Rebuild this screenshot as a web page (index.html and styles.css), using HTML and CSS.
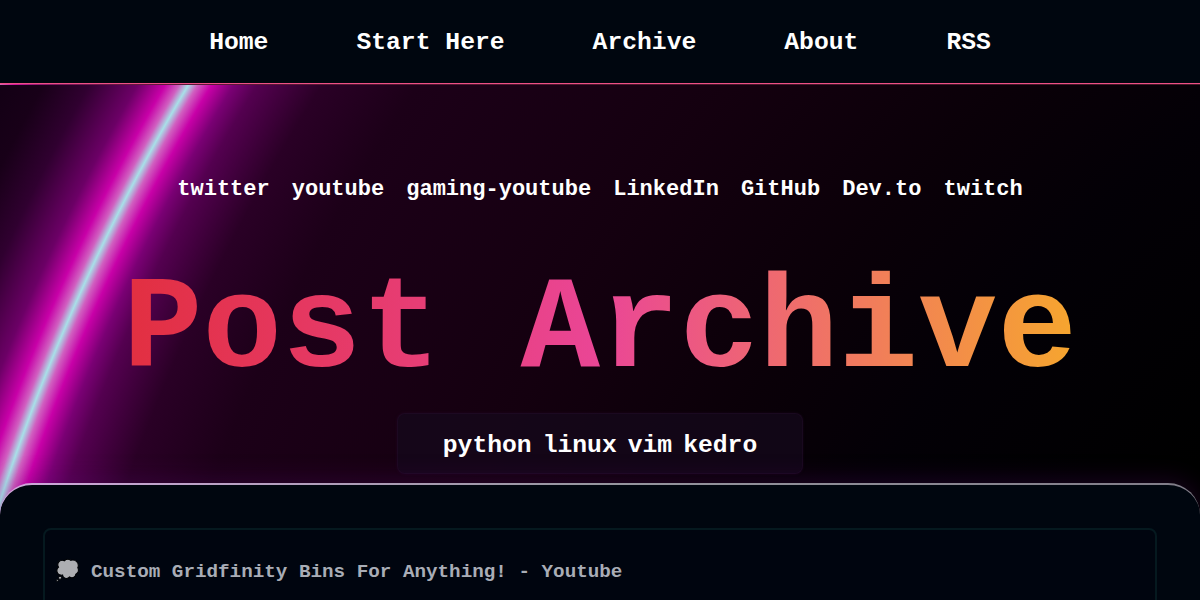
FILE: index.html
```html
<!DOCTYPE html>
<html lang="en">
<head>
<meta charset="utf-8">
<title>Post Archive</title>
<link rel="stylesheet" href="styles.css">
</head>
<body>
<div class="page">
  <nav class="nav">
    <a href="#">Home</a><a href="#">Start Here</a><a href="#">Archive</a><a href="#">About</a><a href="#">RSS</a>
  </nav>
  <header class="hero">
    <div class="socials">
      <a href="#">twitter</a><a href="#">youtube</a><a href="#">gaming-youtube</a><a href="#">LinkedIn</a><a href="#">GitHub</a><a href="#">Dev.to</a><a href="#">twitch</a>
    </div>
    <h1 class="title">Post Archive</h1>
    <div class="tags">
      <a href="#">python</a><a href="#">linux</a><a href="#">vim</a><a href="#">kedro</a>
    </div>
  </header>
  <main class="sheet">
    <article class="card">
      <p class="post"><span class="emoji">💭</span><a href="#">Custom Gridfinity Bins For Anything! - Youtube</a></p>
    </article>
  </main>
</div>
</body>
</html>
```
FILE: styles.css
```css
* { box-sizing: border-box; }
html, body { margin: 0; height: 100%; background: #00060f; }
body { font-family: "Liberation Mono", monospace; font-weight: 700; color: #fff; }
a { color: inherit; text-decoration: none; }
.page { height: 600px; overflow: hidden; display: flex; flex-direction: column; }
.nav {
  height: 84px; flex: none; display: flex; justify-content: center; align-items: center; gap: 88px;
  background: #00060f; border-bottom: 1px solid #ee4f86; font-size: 24.7px;
}
.hero {
  height: 440px; flex: none; display: flex; flex-direction: column; align-items: center; padding-top: 92px;
  border-top: 1px solid rgba(238, 79, 134, .3);
  background: radial-gradient(circle 2260px at 1945px 1045px,
    #000 1000px, #030006 1250px, #0a0008 1400px, #14000f 1600px, #1c0018 1850px, #2a0026 1930px, #540050 1985px, #7a0074 2005px, #c800a8 2024px, #d060c0 2036px, #a8e0e8 2044px, #d060c0 2052px, #c800a8 2064px, #6c0066 2088px, #300030 2130px, #180018 2170px, #0c0010 2260px);
}
.socials { display: flex; gap: 22px; font-size: 22.02px; line-height: 26px; }
.title {
  margin: 49px 0 0; font-size: 132.5px; line-height: 1.2; font-weight: 700; white-space: pre;
  background: linear-gradient(90deg, #e22f40, #ea4696 50%, #f6a62e 100%);
  -webkit-background-clip: text; background-clip: text; color: transparent;
}
.tags {
  margin-top: 2px; padding-top: 2px; width: 406px; height: 61px; flex: none; display: flex; gap: 11px; justify-content: center; align-items: center;
  font-size: 24.7px; background: rgba(22, 8, 28, .7); border: 1px solid rgba(60, 25, 70, .2); border-radius: 8px; box-shadow: 0 0 3px rgba(50, 15, 55, .3);
}
.sheet {
  margin-top: -41px; position: relative; flex: 1; border-top: 2px solid transparent;
  background: linear-gradient(#00060f, #00060f) padding-box, linear-gradient(90deg, #d0a8dc, #96969f 50%, #807c88) border-box;
  border-radius: 32px 32px 0 0; padding: 43px 43px 0;
  box-shadow: 0 -3px 24px rgba(90, 10, 110, .28);
}
.card { height: 200px; border: 2px solid #05191f; border-radius: 8px; padding: 28px 10px; background: #00050f; }
.post { margin: 0; display: flex; align-items: center; gap: 11px; font-size: 19.25px; line-height: 28px; color: #a9adb6; }
.emoji { font-size: 20px; line-height: 28px; opacity: .68; }
```
